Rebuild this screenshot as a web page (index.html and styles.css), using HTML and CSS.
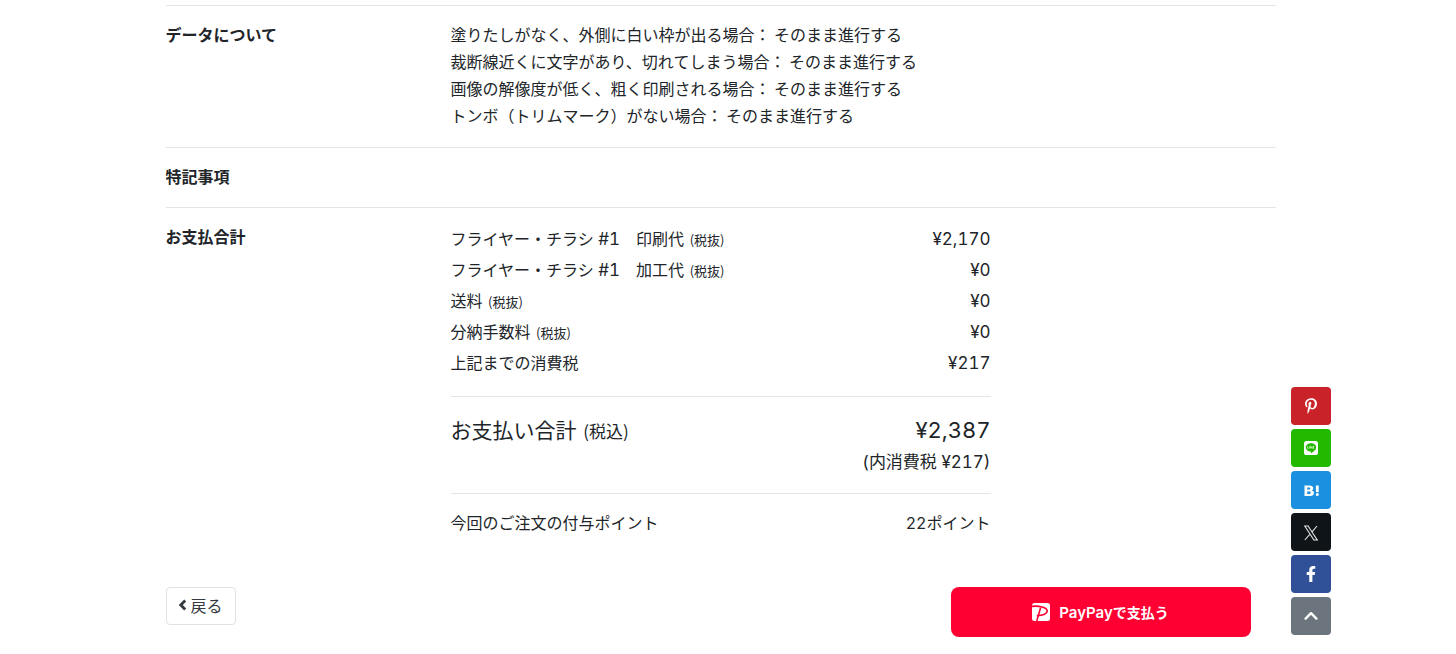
FILE: index.html
```html
<!DOCTYPE html>
<html lang="ja">
<head>
<meta charset="utf-8">
<meta name="viewport" content="width=device-width, initial-scale=1">
<title>ご注文内容の確認</title>
<link rel="stylesheet" href="styles.css">
</head>
<body>
<main class="container">
  <section class="row">
    <h2 class="row-label">データについて</h2>
    <div class="row-body">
      <p>塗りたしがなく、外側に白い枠が出る場合： そのまま進行する</p>
      <p>裁断線近くに文字があり、切れてしまう場合： そのまま進行する</p>
      <p>画像の解像度が低く、粗く印刷される場合： そのまま進行する</p>
      <p>トンボ（トリムマーク）がない場合： そのまま進行する</p>
    </div>
  </section>
  <section class="row">
    <h2 class="row-label">特記事項</h2>
    <div class="row-body"></div>
  </section>
  <section class="row">
    <h2 class="row-label">お支払合計</h2>
    <div class="row-body">
      <table class="bill">
        <tbody class="items">
          <tr><th scope="row">フライヤー・チラシ<span class="latin"> #1</span>　印刷代 <small>(税抜)</small></th><td>¥2,170</td></tr>
          <tr><th scope="row">フライヤー・チラシ<span class="latin"> #1</span>　加工代 <small>(税抜)</small></th><td>¥0</td></tr>
          <tr><th scope="row">送料 <small>(税抜)</small></th><td>¥0</td></tr>
          <tr><th scope="row">分納手数料 <small>(税抜)</small></th><td>¥0</td></tr>
          <tr><th scope="row">上記までの消費税</th><td>¥217</td></tr>
        </tbody>
        <tbody class="total">
          <tr><th scope="row">お支払い合計 <small>(税込)</small></th><td>¥2,387<div class="tax">(内消費税 ¥217)</div></td></tr>
        </tbody>
        <tbody class="points">
          <tr><th scope="row">今回のご注文の付与ポイント</th><td>22ポイント</td></tr>
        </tbody>
      </table>
    </div>
  </section>
  <div class="actions">
    <button type="button" class="back">
      <svg class="chevron" viewBox="0 0 8 12" aria-hidden="true"><path d="M6.200 1.500 1.800 6l4.400 4.500" fill="none" stroke="currentColor" stroke-width="2.800"/></svg>
      戻る
    </button>
    <button type="button" class="paypay">
      <svg class="paypay-logo" viewBox="0 0 18 18" aria-hidden="true">
        <rect width="18" height="18" rx="2.500" fill="#fff"/>
        <path d="M0 3.400C6.500 2.500 15.600 4.200 15.200 8.200c-.4 3.200-5.200 4.400-10.400 4.400" fill="none" stroke="#f03" stroke-width="1.600"/>
        <path d="M8.600 4.600 4.800 18" fill="none" stroke="#f03" stroke-width="1.600"/>
      </svg>
      <span><span class="brand">PayPay</span>で支払う</span>
    </button>
  </div>
</main>
<nav class="share" aria-label="シェア">
  <a class="share-link pinterest" href="#" aria-label="Pinterest">
    <svg viewBox="0 0 384 512" width="12" height="16"><path fill="#fff" d="M204 6.500C101.400 6.500 0 74.900 0 185.600 0 256 39.600 296 63.600 296c9.900 0 15.600-27.600 15.600-35.400 0-9.300-23.700-29.100-23.700-67.800 0-80.400 61.200-137.400 140.400-137.400 68.100 0 118.500 38.700 118.500 109.800 0 53.100-21.300 152.700-90.300 152.700-24.900 0-46.200-18-46.200-43.800 0-37.800 26.400-74.400 26.400-113.400 0-66.200-93.900-54.200-93.900 25.800 0 16.800 2.100 35.400 9.600 50.700-13.800 59.400-42 147.900-42 209.100 0 18.900 2.700 37.500 4.500 56.400 3.400 3.800 1.700 3.400 6.900 1.500 50.400-69 48.600-82.500 71.400-172.800 12.300 23.400 44.100 36 69.300 36 106.200 0 153.900-103.500 153.900-196.800C384 71.300 298.200 6.500 204 6.500z"/></svg>
  </a>
  <a class="share-link line" href="#" aria-label="LINE">
    <svg viewBox="0 0 14 14" width="14" height="14">
      <rect width="14" height="14" rx="2.600" fill="#fff"/>
      <path fill="#24b901" d="M7 2.200c3 0 5.200 1.800 5.200 4.200 0 2-1.900 3.600-5.200 6.100.2-1 .1-1.700-.5-1.900C3.700 10.300 1.800 8.600 1.800 6.400 1.800 4 4 2.200 7 2.200z"/>
      <path fill="none" stroke="#fff" stroke-width=".6" d="M3.500 5.300v2.100h1.100M5.400 5.200v2.300M6.400 7.500V5.300l1.500 2.100V5.200M10.200 5.300H9v2.100h1.200M9 6.400h1.100"/>
    </svg>
  </a>
  <a class="share-link hatena" href="#" aria-label="はてなブックマーク">
    <svg viewBox="0 0 16 14" width="16" height="14">
      <path fill="#fff" fill-rule="evenodd" d="M1.500 2.500h4.900c2.400 0 3.800 1 3.800 2.700 0 1.200-.6 2-1.700 2.300 1.600.2 2.500 1.200 2.500 2.500 0 1.900-1.500 3-3.900 3H1.500zM4.200 4.500v2.100h1.600c.9 0 1.500-.4 1.500-1.100s-.6-1-1.500-1zM4.200 8.600V11h1.800c1.100 0 1.800-.4 1.800-1.200s-.7-1.200-1.800-1.200z"/>
      <path fill="#fff" d="M12.900 2.500h2.800v6.700h-2.800z"/><circle cx="14.300" cy="11.600" r="1.500" fill="#fff"/>
    </svg>
  </a>
  <a class="share-link x" href="#" aria-label="X">
    <svg viewBox="0 0 16 18" width="16" height="18"><path fill="none" stroke="#e4e5e5" stroke-width="1.100" d="M1.800 3h3.300l9.100 14h-3.300zM1.200 3h4.500M10.400 17h4.600M14 3 8.800 9.100M7 11.100 1.800 17"/></svg>
  </a>
  <a class="share-link facebook" href="#" aria-label="Facebook">
    <svg viewBox="0 0 320 512" width="10" height="16"><path fill="#fff" d="m279.140 288 14.220-92.660h-88.910v-60.130c0-25.350 12.420-50.060 52.240-50.060h40.420V6.260S260.430 0 225.360 0c-73.220 0-121.080 44.380-121.080 124.720v70.620H22.890V288h81.390v224h100.170V288z"/></svg>
  </a>
  <a class="share-link top" href="#" aria-label="ページの先頭へ">
    <svg viewBox="0 0 14 10" width="14" height="10"><path fill="none" stroke="#fff" stroke-width="2.400" stroke-linecap="round" stroke-linejoin="round" d="M1.600 7.600 7 2.200l5.400 5.400"/></svg>
  </a>
</nav>
</body>
</html>
```
FILE: styles.css
```css
* {
  box-sizing: border-box;
}

body {
  margin: 0;
  padding: 5px 15px 0 0;
  background: #fff;
  color: #212529;
  font-family: "Noto Sans CJK JP", sans-serif;
  font-size: 16px;
  line-height: 27px;
}

p,
h2 {
  margin: 0;
}

.container {
  max-width: 1110px;
  margin: 0 auto;
}

.row {
  display: grid;
  grid-template-columns: 285px 1fr;
  padding: 15px 0 17px;
  border-top: 1px solid #e5e5e5;
}

.row-label {
  font-size: 16px;
  font-weight: 700;
}

.row-body {
  padding-bottom: 1px;
}

.bill {
  width: 100%;
  max-width: 540px;
  border-collapse: collapse;
}

.bill th {
  padding: 2px 0;
  font-weight: 400;
  text-align: left;
  vertical-align: baseline;
}

.bill td {
  padding: 2px 0;
  font-family: Inter, "Noto Sans CJK JP", sans-serif;
  font-size: 17px;
  font-variant-numeric: tabular-nums;
  text-align: right;
  vertical-align: baseline;
}

.bill small {
  margin-left: 2px;
  font-size: 13px;
  line-height: 1;
}

.latin {
  font-family: Inter, sans-serif;
  font-size: 17px;
  font-variant-numeric: tabular-nums;
  line-height: 1;
}

.items th,
.items td {
  line-height: 26px;
}

.items tr:last-child > * {
  padding-bottom: 20px;
}

.total {
  border-top: 1px solid #e5e5e5;
  border-bottom: 1px solid #e5e5e5;
}

.bill .total th,
.bill .total td {
  padding: 15px 0 16px;
  font-size: 21px;
  line-height: 34px;
}

.bill .total td {
  font-size: 22px;
}

.bill .total small,
.tax {
  font-size: 17px;
}

.tax {
  line-height: 30px;
}

.bill .points th,
.bill .points td {
  padding-top: 15px;
  font-size: 16px;
}

.actions {
  display: flex;
  justify-content: space-between;
  align-items: flex-start;
  padding: 30px 25px 16px 0;
}

.back {
  display: flex;
  align-items: center;
  gap: 4px;
  height: 38px;
  padding: 0 12px 2px;
  border: 1px solid #dee2e6;
  border-radius: 4px;
  background: #fff;
  color: #343a40;
  font: inherit;
}

.chevron {
  width: 8px;
  height: 12px;
}

.paypay {
  display: flex;
  align-items: center;
  justify-content: center;
  gap: 9px;
  width: 300px;
  height: 50px;
  padding: 0 0 1px;
  border: 0;
  border-radius: 8px;
  background: #f03;
  color: #fff;
  font-family: "Noto Sans CJK JP", sans-serif;
  font-size: 14px;
  font-weight: 700;
}

.brand {
  font-family: Inter, sans-serif;
  font-size: 15px;
  font-weight: 600;
}

.paypay-logo {
  width: 18px;
  height: 18px;
}

.share {
  position: fixed;
  right: 125px;
  bottom: 19px;
  display: flex;
  flex-direction: column;
  gap: 4px;
}

.share-link {
  display: flex;
  align-items: center;
  justify-content: center;
  width: 40px;
  height: 38px;
  border-radius: 4px;
}

.pinterest {
  background: #c92228;
}

.line {
  background: #24b901;
}

.hatena {
  background: #1b8fe0;
}

.x {
  background: #0f1419;
}

.facebook {
  background: #305097;
}

.top {
  background: #6c757d;
}
```
